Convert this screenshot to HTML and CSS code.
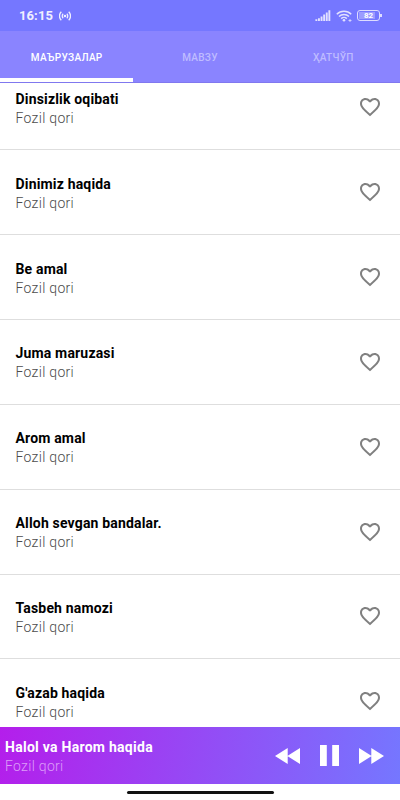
FILE: index.html
```
<!DOCTYPE html>
<html lang="uz">
<head>
  <meta charset="UTF-8">
  <meta name="viewport" content="width=device-width, initial-scale=1.0">
  <title>Маърузалар</title>
  <link rel="stylesheet" href="styles.css">
</head>
<body>

  <!-- Heart outline shared by all rows -->
  <svg class="sprite" xmlns="http://www.w3.org/2000/svg">
    <symbol id="heart" viewBox="0 0 24 24">
      <path d="M16.5 3c-1.74 0-3.41.81-4.5 2.09C10.91 3.81 9.24 3 7.5 3 4.42 3 2 5.42 2 8.5c0 3.78 3.4 6.86 8.55 11.54L12 21.35l1.45-1.32C18.6 15.36 22 12.28 22 8.5 22 5.42 19.58 3 16.5 3zm-4.4 15.55l-.1.1-.1-.1C7.14 14.24 4 11.39 4 8.5 4 6.5 5.5 5 7.5 5c1.54 0 3.04.99 3.57 2.36h1.87C13.46 5.99 14.96 5 16.5 5c2 0 3.5 1.5 3.5 3.5 0 2.89-3.14 5.74-7.9 10.05z"/>
    </symbol>
  </svg>

  <div class="app">
    <div class="status-bar">
      <span class="time">16:15</span>
      <svg class="hotspot" viewBox="0 0 12 10">
        <circle cx="6" cy="5" r="1.3" fill="currentColor" stroke="none"/>
        <path d="M4.2 2.8a3 3 0 0 0 0 4.4M7.8 2.8a3 3 0 0 1 0 4.4M2.3 .8a5.8 5.8 0 0 0 0 8.4M9.7 .8a5.8 5.8 0 0 1 0 8.4"/>
      </svg>
      <div class="status-icons">
        <svg class="signal" viewBox="0 0 16 11">
          <path d="M.4 9.2h1.9V11H.4zM3 8.2h1.9V11H3zM5.6 6.6h1.9V11H5.6zM8.2 4.6h1.9V11H8.2zM10.8 2.6h1.9V11h-1.9zM13.4 .3h1.9V11h-1.9z"/>
        </svg>
        <svg class="wifi" viewBox="0 0 16 12">
          <path d="M.8 4.2a10 10 0 0 1 14.4 0M3 6.5a7 7 0 0 1 10 0M5.2 8.6a4 4 0 0 1 5.6 0"/>
          <circle cx="8" cy="10.2" r="1.3"/>
          <path class="thin" d="M12.5 10.5h3M14 9v3"/>
        </svg>
        <div class="battery"><span>82</span></div>
      </div>
    </div>

    <div class="tabs">
      <div class="tab active">МАЪРУЗАЛАР</div>
      <div class="tab">МАВЗУ</div>
      <div class="tab">ҲАТЧЎП</div>
    </div>

    <div class="list">
      <div class="row">
        <div class="info"><div class="title">Dinsizlik oqibati</div><div class="author">Fozil qori</div></div>
        <svg class="heart"><use href="#heart"/></svg>
      </div>
      <div class="row">
        <div class="info"><div class="title">Dinimiz haqida</div><div class="author">Fozil qori</div></div>
        <svg class="heart"><use href="#heart"/></svg>
      </div>
      <div class="row">
        <div class="info"><div class="title">Be amal</div><div class="author">Fozil qori</div></div>
        <svg class="heart"><use href="#heart"/></svg>
      </div>
      <div class="row">
        <div class="info"><div class="title">Juma maruzasi</div><div class="author">Fozil qori</div></div>
        <svg class="heart"><use href="#heart"/></svg>
      </div>
      <div class="row">
        <div class="info"><div class="title">Arom amal</div><div class="author">Fozil qori</div></div>
        <svg class="heart"><use href="#heart"/></svg>
      </div>
      <div class="row">
        <div class="info"><div class="title">Alloh sevgan bandalar.</div><div class="author">Fozil qori</div></div>
        <svg class="heart"><use href="#heart"/></svg>
      </div>
      <div class="row">
        <div class="info"><div class="title">Tasbeh namozi</div><div class="author">Fozil qori</div></div>
        <svg class="heart"><use href="#heart"/></svg>
      </div>
      <div class="row">
        <div class="info"><div class="title">G'azab haqida</div><div class="author">Fozil qori</div></div>
        <svg class="heart"><use href="#heart"/></svg>
      </div>
    </div>

    <div class="player">
      <div class="info"><div class="title">Halol va Harom haqida</div><div class="author">Fozil qori</div></div>
      <div class="controls">
        <svg class="skip" viewBox="0 0 25 16"><path d="M12.7 0v16L0 8zM25 0v16L12.3 8z"/></svg>
        <svg class="pause" viewBox="0 0 19 21"><path d="M0 0h6.8v21H0zM12.2 0H19v21h-6.8z"/></svg>
        <svg class="skip" viewBox="0 0 25 16"><path d="M0 0v16l12.7-8zM12.3 0v16L25 8z"/></svg>
      </div>
    </div>

    <div class="nav-bar"><div class="handle"></div></div>
  </div>

</body>
</html>
```
FILE: styles.css
```
* {
  box-sizing: border-box;
}

body {
  margin: 0;
  font-family: Roboto, sans-serif;
  background-color: #fff;
}

.sprite {
  display: none;
}

.app {
  display: flex;
  flex-direction: column;
  height: 800px;
  overflow: hidden;
}

/* Status bar */
.status-bar {
  display: flex;
  align-items: center;
  flex: 0 0 31px;
  padding: 0 18px 0 19px;
  background-color: #7577ff;
  color: #f0efff;
}

.time {
  width: 34px;
  font-size: 13px;
  font-weight: 700;
  letter-spacing: 0.1px;
}

.hotspot {
  width: 12px;
  height: 10px;
  margin-left: 6px;
  fill: none;
  stroke: currentColor;
  stroke-width: 1.3;
}

.status-icons {
  display: flex;
  align-items: center;
  margin-left: auto;
}

.signal {
  width: 16px;
  height: 11px;
  fill: #e2e1ff;
}

.wifi {
  width: 16px;
  height: 12px;
  margin: 0 5px;
  fill: none;
  stroke: #e2e1ff;
  stroke-width: 1.5;
}

.wifi circle {
  fill: #e2e1ff;
  stroke: none;
}

.wifi .thin {
  stroke-width: 0.8;
}

.battery {
  position: relative;
  width: 23px;
  height: 11px;
  margin-right: 2px;
  padding: 1px;
  border: 1px solid #dddcff;
  border-radius: 3px;
}

.battery span {
  display: block;
  height: 7px;
  background: linear-gradient(90deg, #9c9cff 85%, transparent 85%);
  color: #fff;
  font-size: 8px;
  font-weight: 700;
  line-height: 8px;
  text-align: center;
}

.battery::after {
  content: "";
  position: absolute;
  top: 3px;
  right: -3px;
  width: 2px;
  height: 3px;
  background-color: #dddcff;
}

/* Tabs */
.tabs {
  display: flex;
  flex: 0 0 52px;
  background-color: #8a84ff;
  border-bottom: 1px solid #8078ef;
}

.tab {
  flex: 1;
  padding-top: 6px;
  border-bottom: 4px solid transparent;
  color: #bfbcff;
  font-size: 10px;
  font-weight: 500;
  letter-spacing: 0.3px;
  line-height: 41px;
  text-align: center;
}

.tab.active {
  border-bottom-color: #fff;
  color: #fff;
}

/* List, scrolled a little under the tabs */
.list {
  flex: 1;
  min-height: 0;
  overflow: hidden;
}

.row {
  display: flex;
  align-items: center;
  justify-content: space-between;
  height: 84.85px;
  padding: 0 18px 0 15.5px;
  border-bottom: 1px solid #dedede;
}

.row:first-child {
  margin-top: -17.5px;
}

.row .info {
  padding-top: 2px;
}

.title {
  color: #000;
  font-size: 14px;
  font-weight: 700;
  letter-spacing: 0.17px;
  line-height: 19px;
}

.author {
  color: #4c4c4c;
  font-size: 14px;
  font-weight: 300;
  letter-spacing: 0.3px;
  line-height: 18px;
}

.heart {
  width: 24px;
  height: 24px;
  fill: #808080;
}

/* Player */
.player {
  display: flex;
  align-items: center;
  justify-content: space-between;
  flex: 0 0 57px;
  padding: 0 16px 0 5px;
  background: linear-gradient(100deg, #b41eeb, #7577ff);
}

.player .info {
  padding-top: 1px;
}

.player .title {
  color: #fff;
  letter-spacing: 0.27px;
}

.player .author {
  color: #dc9cf8;
}

.controls {
  display: flex;
  align-items: center;
  fill: #fff;
}

.skip {
  width: 25px;
  height: 16px;
}

.pause {
  width: 19px;
  height: 21px;
  margin: 0 20px;
}

/* System navigation */
.nav-bar {
  display: flex;
  justify-content: center;
  flex: 0 0 16px;
  padding-top: 7px;
}

.handle {
  width: 147px;
  height: 3px;
  border-radius: 2px;
  background-color: #111;
}
```
